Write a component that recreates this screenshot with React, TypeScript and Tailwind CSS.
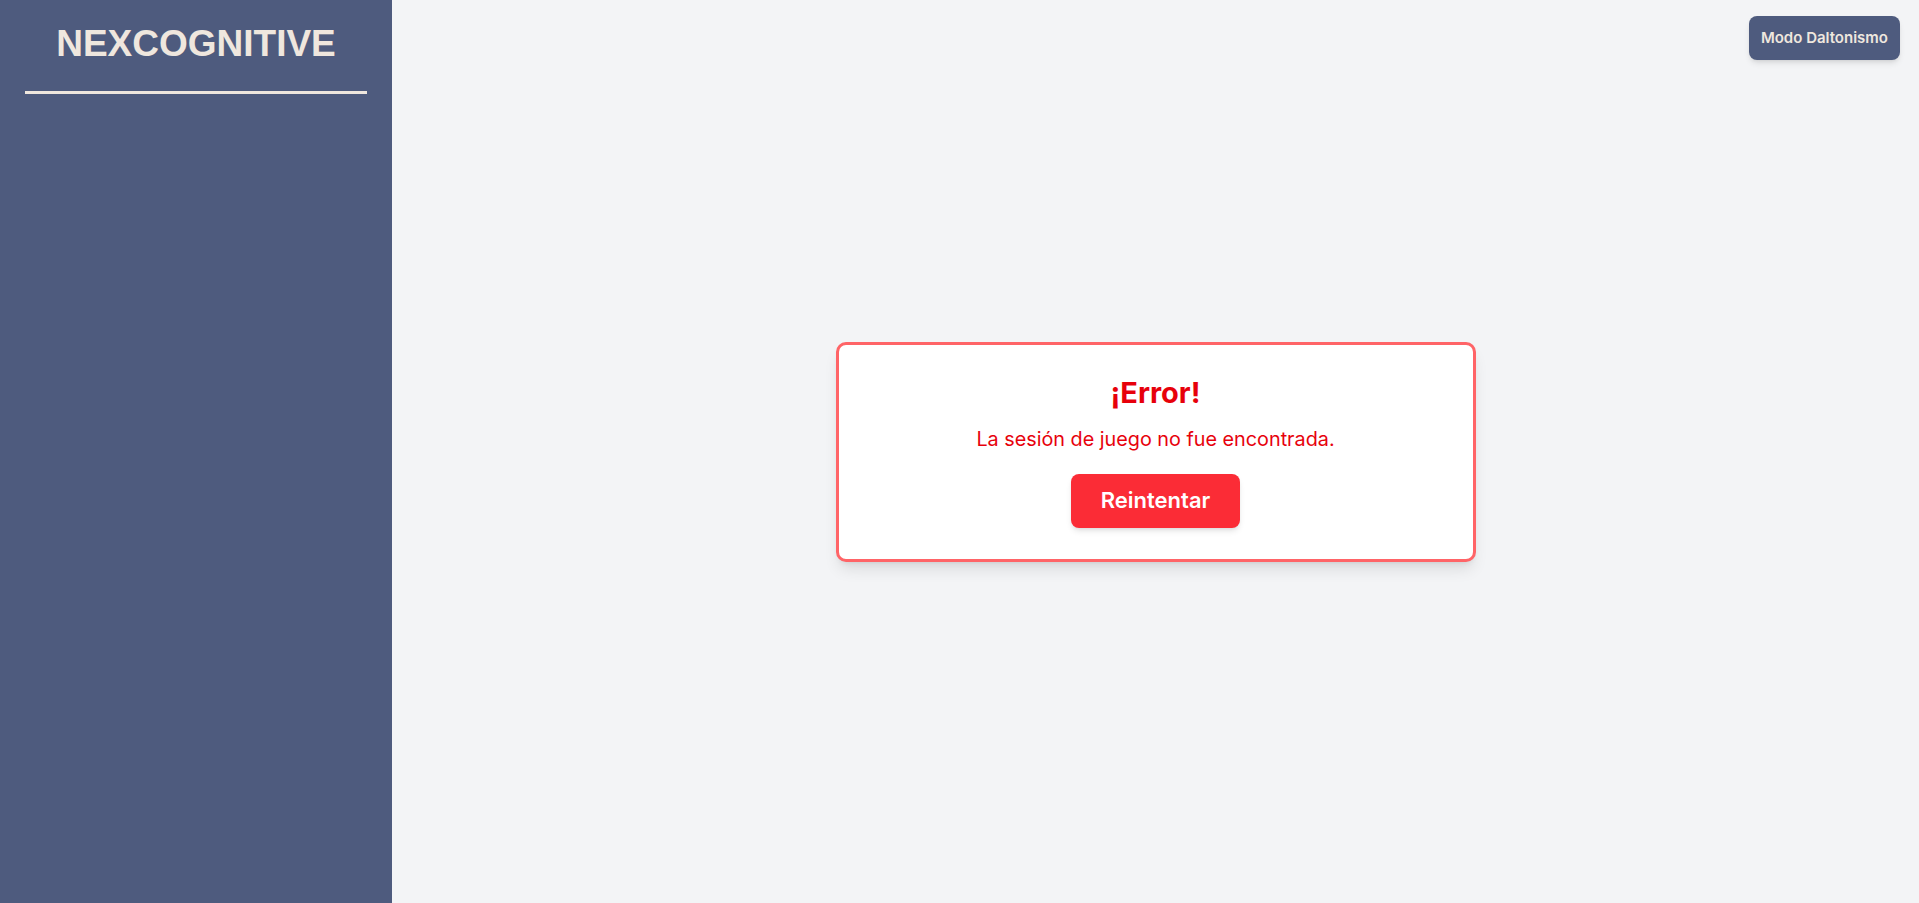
export default function App() {
  return (
    <div className="flex h-screen w-full bg-gray-100 font-['Inter',sans-serif]">
      <aside className="flex h-full w-[392px] shrink-0 flex-col bg-[#4e5b7e] px-[25px] pt-6">
        <h1 className="text-center font-['Liberation_Sans',Arial,sans-serif] text-[37px] leading-10 font-bold text-[#efe7de]">
          NEXCOGNITIVE
        </h1>
        <div className="mt-[27px] h-[3px] w-full bg-[#efe7de]" />
      </aside>

      <main className="relative flex flex-1 items-center justify-center">
        <button className="absolute top-4 right-[19px] rounded-lg bg-[#4e5b7e] px-3 py-3 text-[15px] leading-5 font-semibold text-[#efe7de] shadow-md">
          Modo Daltonismo
        </button>

        <div className="flex w-[640px] flex-col items-center rounded-[10px] border-[3px] border-red-400 bg-white px-8 pt-[30px] pb-[31px] shadow-lg">
          <h2 className="text-[29px] leading-9 font-bold text-red-600">¡Error!</h2>
          <p className="mt-[14px] text-[19.8px] leading-7 text-red-600">
            La sesión de juego no fue encontrada.
          </p>
          <button className="mt-[21px] h-[54px] rounded-lg bg-red-500 px-[30px] text-[22px] font-semibold text-white shadow-md">
            Reintentar
          </button>
        </div>
      </main>
    </div>
  );
}
